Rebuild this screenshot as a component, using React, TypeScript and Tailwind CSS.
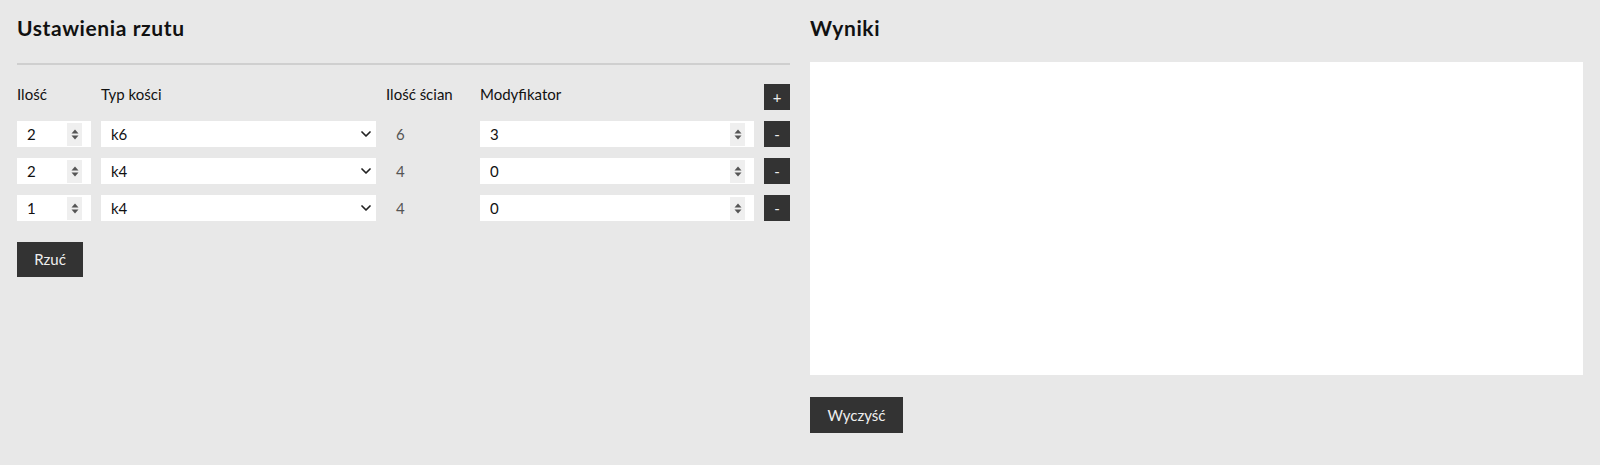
import React from 'react';

const rows = [
  { qty: 2, die: 'k6', faces: 6, mod: 3 },
  { qty: 2, die: 'k4', faces: 4, mod: 0 },
  { qty: 1, die: 'k4', faces: 4, mod: 0 },
];

const dice = ['k4', 'k6', 'k8', 'k10', 'k12', 'k20', 'k100'];

const Chevron = () => (
  <svg
    className="pointer-events-none absolute right-[5px] top-1/2 -translate-y-1/2"
    width="10"
    height="6"
    viewBox="0 0 10 6"
    fill="none"
  >
    <path d="M1 1l4 4 4-4" stroke="#222" strokeWidth="1.7" strokeLinecap="round" strokeLinejoin="round" />
  </svg>
);

// native spinner is hover-only in chrome, so draw the always-on one
const Spinner = () => (
  <div className="pointer-events-none absolute right-[9px] top-[2px] bottom-[1px] w-[15px] bg-[#efefef] flex items-center justify-center">
    <svg width="8" height="11" viewBox="0 0 8 11">
      <path d="M4 0.5L7.5 4.5H0.5Z" fill="#555" />
      <path d="M4 10.5L7.5 6.5H0.5Z" fill="#555" />
    </svg>
  </div>
);

const NumberField = ({ value, min }: { value: number; min?: number }) => (
  <div className="relative h-[26px]">
    <input
      type="number"
      defaultValue={value}
      min={min}
      className="h-[26px] w-full bg-white pl-[10px] pr-[26px] outline-none [appearance:textfield] [&::-webkit-inner-spin-button]:appearance-none [&::-webkit-outer-spin-button]:appearance-none"
    />
    <Spinner />
  </div>
);

export default function App() {
  return (
    <div
      className="min-h-[465px] bg-[#e8e8e8] text-[#111] px-[17px] grid grid-cols-2 gap-x-[20px]"
      style={{ fontFamily: 'Lato, "Noto Sans", sans-serif' }}
    >
      {/* Ustawienia */}
      <section className="flex flex-col">
        <div className="pt-[14px] pb-[21px] border-b-2 border-[#cfcfcf]">
          <h2 className="text-[21px] leading-[28px] font-bold tracking-[0.6px]">Ustawienia rzutu</h2>
        </div>

        <div className="mt-[19px] grid grid-cols-[74px_275px_84px_274px_26px] gap-x-[10px] gap-y-[11px] auto-rows-[26px] items-center text-[15px]">
          <span className="-mt-[5px]">Ilość</span>
          <span className="-mt-[5px]">Typ kości</span>
          <span className="-mt-[5px]">Ilość ścian</span>
          <span className="-mt-[5px]">Modyfikator</span>
          <button className="h-[26px] w-[26px] bg-[#333] text-[#eee] text-[15px] leading-none">+</button>

          {rows.map((r, i) => (
            <React.Fragment key={i}>
              <NumberField value={r.qty} min={1} />
              <div className="relative h-[26px]">
                <select
                  defaultValue={r.die}
                  className="h-[26px] w-full appearance-none bg-white pl-[10px] outline-none"
                >
                  {dice.map((d) => (
                    <option key={d} value={d}>
                      {d}
                    </option>
                  ))}
                </select>
                <Chevron />
              </div>
              <span className="pl-[10px] text-[#555]">{r.faces}</span>
              <NumberField value={r.mod} />
              <button className="h-[26px] w-[26px] bg-[#333] text-[#eee] text-[15px] leading-none">-</button>
            </React.Fragment>
          ))}
        </div>

        <div className="mt-[21px]">
          <button className="h-[35px] w-[66px] bg-[#333] text-[#eee] text-[15px]">Rzuć</button>
        </div>
      </section>

      {/* Wyniki */}
      <section className="flex flex-col">
        <div className="pt-[14px] pb-[20px]">
          <h2 className="text-[21px] leading-[28px] font-bold tracking-[0.6px]">Wyniki</h2>
        </div>
        <div className="h-[313px] bg-white"></div>
        <div className="mt-[22px]">
          <button className="h-[36px] w-[93px] bg-[#333] text-[#eee] text-[15px]">Wyczyść</button>
        </div>
      </section>
    </div>
  );
}
